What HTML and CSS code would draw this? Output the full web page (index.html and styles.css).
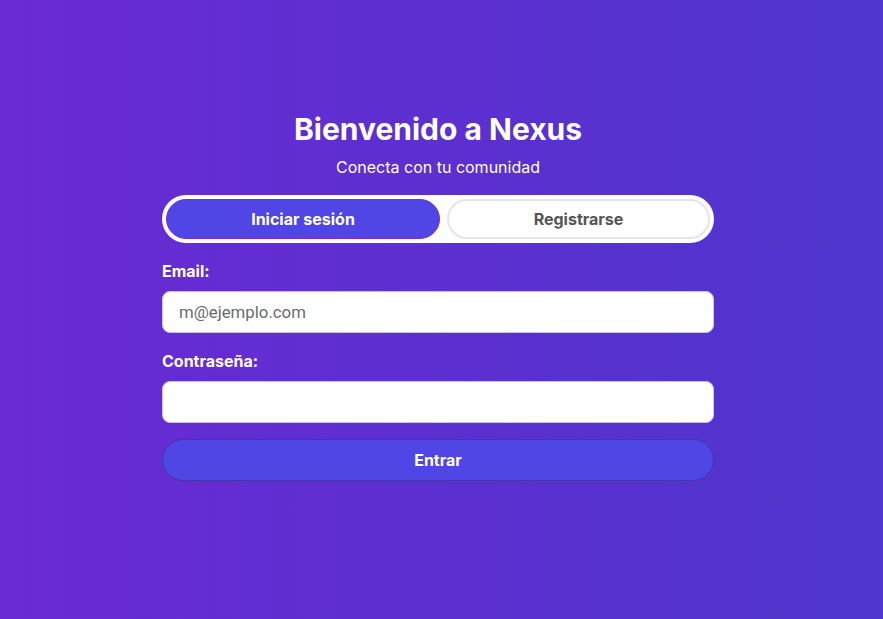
FILE: index.html
```html
<!DOCTYPE html>
<html lang="es">
<head>
<meta charset="utf-8">
<title>Nexus</title>
<link rel="stylesheet" href="styles.css">
</head>
<body>
<main class="page">
  <div class="card">
    <h1 class="title">Bienvenido a Nexus</h1>
    <p class="subtitle">Conecta con tu comunidad</p>
    <div class="tabs">
      <button class="tab tab-active">Iniciar sesión</button>
      <button class="tab">Registrarse</button>
    </div>
    <form class="form">
      <label class="label" for="email">Email:</label>
      <input class="input" id="email" type="email" placeholder="m@ejemplo.com">
      <label class="label label-pw" for="pw">Contraseña:</label>
      <input class="input" id="pw" type="password">
      <button class="submit" type="button">Entrar</button>
    </form>
  </div>
</main>
</body>
</html>
```
FILE: styles.css
```css
* { box-sizing: border-box; }
html, body { margin: 0; height: 100%; }
body {
  font-family: Inter, "Noto Sans", sans-serif;
  background: linear-gradient(90deg, #6a2ad4 0%, #4f35cc 100%);
  color: #fff;
}
.page {
  min-height: 100vh;
  display: flex;
  justify-content: center;
  padding-top: 110px;
  padding-right: 7px;
}
.card {
  width: 552px;
  display: flex;
  flex-direction: column;
}
.title {
  margin: 0;
  text-align: center;
  font-size: 30px;
  font-weight: 700;
  line-height: 38px;
}
.subtitle {
  margin: 9px 0 0;
  text-align: center;
  font-size: 16px;
  line-height: 20px;
}
.tabs {
  margin-top: 18px;
  height: 48px;
  background: #fff;
  border-radius: 24px;
  padding: 4px;
  display: flex;
  gap: 7px;
}
.tab {
  flex: 1;
  border-radius: 20px;
  font-family: inherit;
  font-size: 16px;
  font-weight: 700;
  background: #fff;
  color: #555;
  border: 2px solid #e5e5e5;
}
.tab-active {
  flex: 0 0 274px;
  background: #4f46e5;
  color: #fff;
  border: 1px solid #7c2bd9;
}
.form {
  margin-top: 18px;
  display: flex;
  flex-direction: column;
}
.label {
  font-size: 16px;
  font-weight: 700;
  line-height: 20px;
  margin-bottom: 10px;
}
.label-pw { margin-top: 18px; }
.input {
  height: 42px;
  border-radius: 8px;
  border: 1px solid #c9c2ec;
  background: #fff;
  padding: 0 16px;
  font-family: Roboto, Inter, sans-serif;
  font-size: 16.8px;
  color: #222;
}
.input::placeholder { color: #6b6b6b; }
.submit {
  margin-top: 16px;
  height: 42px;
  border-radius: 21px;
  border: 1px solid #3d3aa8;
  background: #4f46e5;
  color: #fff;
  font-family: inherit;
  font-size: 16px;
  font-weight: 700;
}
```
